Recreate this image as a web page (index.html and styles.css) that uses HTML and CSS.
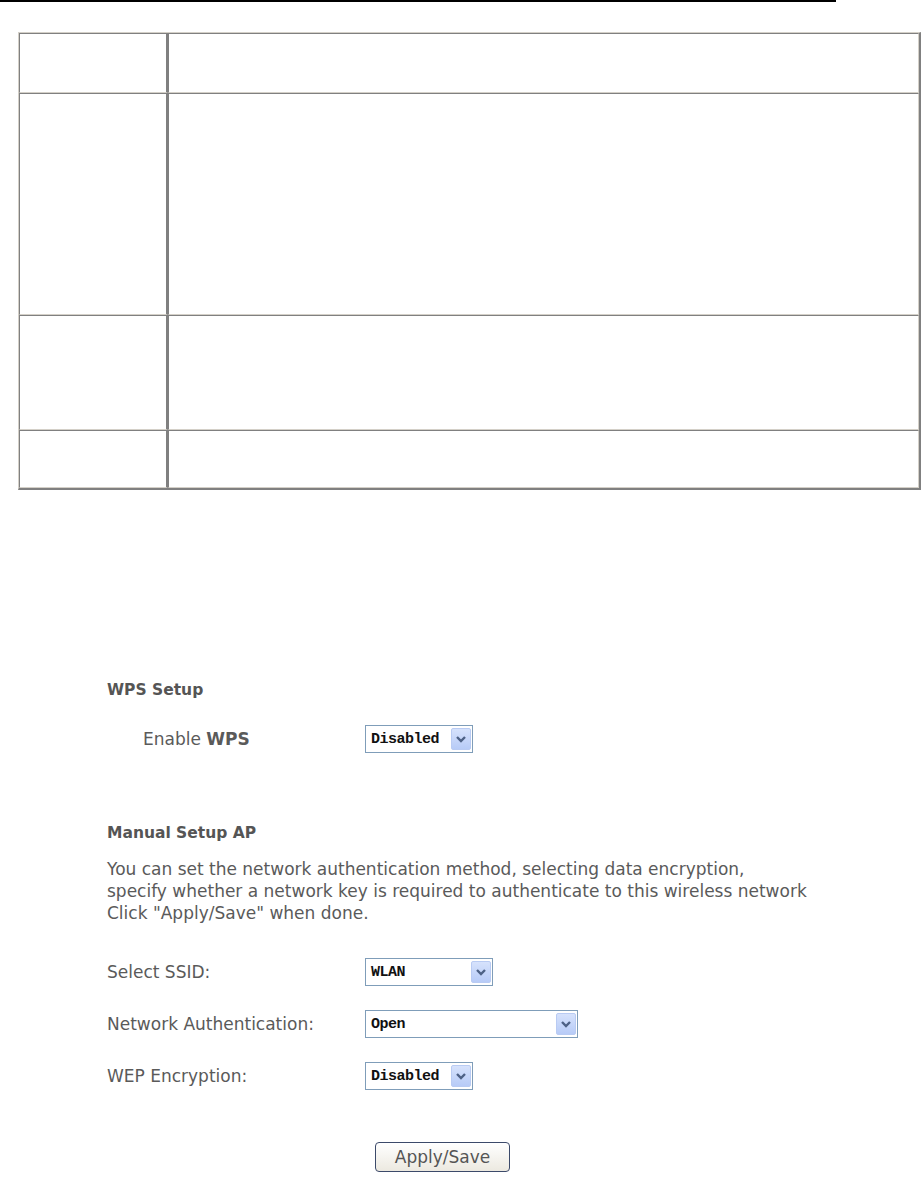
FILE: index.html
```html
<!DOCTYPE html>
<html lang="en">
<head>
  <meta charset="UTF-8">
  <meta name="viewport" content="width=device-width, initial-scale=1.0">
  <title>Wireless Security</title>
  <link rel="stylesheet" href="styles.css">
</head>
<body>

  <div class="rule"></div>

  <!-- Parameter table -->
  <table class="params">
    <tr class="row-a"><td class="name"></td><td></td></tr>
    <tr class="row-b"><td class="name"></td><td></td></tr>
    <tr class="row-c"><td class="name"></td><td></td></tr>
    <tr class="row-d"><td class="name"></td><td></td></tr>
  </table>

  <!-- Router page: wireless security -->
  <div class="panel">
    <h3 class="wps-title">WPS Setup</h3>
    <div class="field indent">
      <label>Enable <b>WPS</b></label>
      <div class="select w-short"><span>Disabled</span><i><svg viewBox="0 0 18 20"><polyline points="5,8 9,12 13,8"/></svg></i></div>
    </div>

    <h3 class="manual-title">Manual Setup AP</h3>
    <p class="note">You can set the network authentication method, selecting data encryption,<br>
      specify whether a network key is required to authenticate to this wireless network<br>
      Click "Apply/Save" when done.</p>

    <div class="field ssid">
      <label>Select SSID:</label>
      <div class="select w-mid"><span>WLAN</span><i><svg viewBox="0 0 18 20"><polyline points="5,8 9,12 13,8"/></svg></i></div>
    </div>
    <div class="field">
      <label>Network Authentication:</label>
      <div class="select w-long"><span>Open</span><i><svg viewBox="0 0 18 20"><polyline points="5,8 9,12 13,8"/></svg></i></div>
    </div>
    <div class="field">
      <label>WEP Encryption:</label>
      <div class="select w-short"><span>Disabled</span><i><svg viewBox="0 0 18 20"><polyline points="5,8 9,12 13,8"/></svg></i></div>
    </div>

    <div class="actions">
      <button type="button">Apply/Save</button>
    </div>
  </div>

</body>
</html>
```

FILE: styles.css
```css
/* General */
body {
  margin: 0;
  padding: 0;
  background-color: #fff;
  font-family: "DejaVu Sans", Verdana, sans-serif;
}

.rule {
  width: 836px;
  height: 2px;
  background-color: #000;
}

/* Parameter table */
.params {
  margin: 30px 0 0 18px;
  width: 903px;
  border-collapse: separate;
  border-spacing: 0;
  border-style: solid;
  border-width: 1px 2px 2px 1px;
  border-color: #d4d0c8 #808080 #808080 #d4d0c8;
}

.params td {
  padding: 0;
  border-style: solid;
  border-width: 1px;
  border-color: #808080 #d4d0c8 #d4d0c8 #808080;
}

.params td.name {
  width: 146px;
  border-right-width: 2px;
  border-right-color: #808080;
}

.row-a { height: 60px; }
.row-b { height: 222px; }
.row-c { height: 115px; }
.row-d { height: 58px; }

/* Router panel */
.panel {
  padding-left: 107px;
  color: #5a5a5a;
  font-size: 17px;
}

.panel h3 {
  margin: 0;
  font-size: 15.5px;
  line-height: 18px;
  font-weight: bold;
  color: #555;
}

.wps-title {
  padding-top: 191px;
}

.manual-title {
  margin-top: 71px !important;
}

.note {
  margin: 16px 0 0;
  line-height: 22px;
}

.field {
  display: flex;
  align-items: center;
  height: 28px;
  margin-top: 24px;
}

.field label {
  width: 258px;
  flex-shrink: 0;
}

.field.indent {
  margin-top: 26px;
  padding-left: 36px;
}

.field.indent label {
  width: 222px;
}

.field.ssid {
  margin-top: 34px;
}

/* Fake dropdowns */
.select {
  display: flex;
  align-items: center;
  justify-content: space-between;
  height: 28px;
  box-sizing: border-box;
  border: 1px solid #7f9db9;
  background-color: #fff;
  padding: 0 1px 0 5px;
}

.select span {
  font-family: "Liberation Mono", "DejaVu Sans Mono", monospace;
  font-size: 15px;
  font-weight: bold;
  color: #111;
  letter-spacing: -0.5px;
}

.select i {
  display: block;
  width: 20px;
  height: 22px;
  box-sizing: border-box;
  border: 1px solid #b9cbf3;
  border-radius: 2px;
  background: linear-gradient(#d6e2fc, #b7cbf7);
}

.select svg {
  display: block;
  width: 18px;
  height: 20px;
  fill: none;
  stroke: #4d6185;
  stroke-width: 2.4;
}

.w-short { width: 108px; }
.w-mid { width: 128px; }
.w-long { width: 213px; }

/* Button */
.actions {
  margin-top: 52px;
  padding-left: 268px;
}

.actions button {
  font-family: "DejaVu Sans", Verdana, sans-serif;
  font-size: 17px;
  color: #555;
  width: 135px;
  height: 30px;
  padding: 0;
  background: linear-gradient(#ffffff, #ece9e0);
  border: 1px solid #3c4a6a;
  border-radius: 4px;
}
```
